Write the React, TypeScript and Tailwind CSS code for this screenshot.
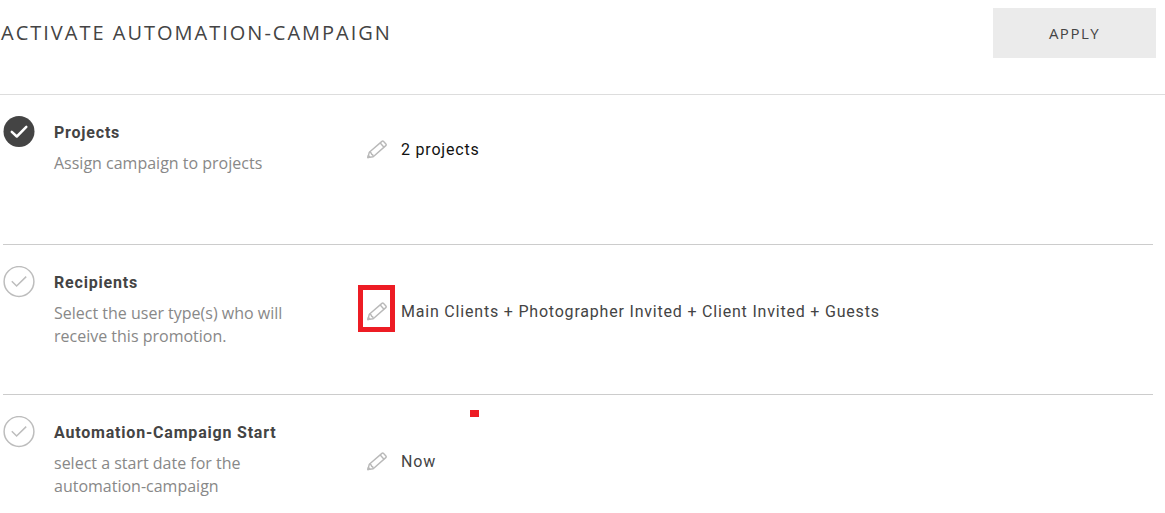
import React from "react";

type Step = {
  id: string;
  title: string;
  description: string;
  value: string;
  done?: boolean;
  highlighted?: boolean;
  valueColor?: string;
};

const STEPS: Step[] = [
  {
    id: "projects",
    title: "Projects",
    description: "Assign campaign to projects",
    value: "2 projects",
    done: true,
    valueColor: "text-[#111111]",
  },
  {
    id: "recipients",
    title: "Recipients",
    description: "Select the user type(s) who will receive this promotion.",
    value: "Main Clients + Photographer Invited + Client Invited + Guests",
    highlighted: true,
  },
  {
    id: "start",
    title: "Automation-Campaign Start",
    description: "select a start date for the automation-campaign",
    value: "Now",
  },
];

const StatusIcon: React.FC<{ done?: boolean }> = ({ done }) => (
  <svg className="h-8 w-8 shrink-0" viewBox="0 0 32 32" fill="none" aria-hidden="true">
    {done ? (
      <circle cx="16" cy="15.5" r="15.5" fill="#444444" />
    ) : (
      <circle cx="16" cy="15.5" r="14.9" stroke="#bdbdbd" strokeWidth="1.5" />
    )}
    <path
      d={done ? "M8.8 15.9l5 4.6L23.3 10.9" : "M8.8 15.2l4.8 4.8L23.2 10.6"}
      stroke={done ? "#ffffff" : "#bdbdbd"}
      strokeWidth={done ? 2.5 : 1.5}
      strokeLinecap={done ? "round" : "butt"}
      strokeLinejoin={done ? "round" : "miter"}
    />
  </svg>
);

const PencilIcon: React.FC = () => (
  <svg className="h-5 w-5" viewBox="0 0 20 20" fill="none" stroke="#b9b9b9" strokeWidth="1.4" strokeLinejoin="round" aria-hidden="true">
    <path d="M0.8 18.6L2.3 13.2L14.9 2.4Q15.8 1.7 16.6 2.5L18.9 5Q19.6 5.9 18.8 6.6L6.2 17.7Z" />
    <path d="M2.3 13.2Q4.4 13.2 4.6 15.2Q6.3 15.6 6.2 17.7M13.2 4L17 8.2" />
    <path d="M0.9 18.5l2-.4-1.5-1.6z" fill="#b9b9b9" />
  </svg>
);

const StepRow: React.FC<{ step: Step }> = ({ step }) => (
  <li className="flex items-start border-b border-[#cccccc] pt-[21px] not-last:min-h-[150px] last:border-b-0">
    <StatusIcon done={step.done} />
    <div className="ml-[19px] mt-[7px] flex min-w-0 flex-1 items-center">
      <div className="w-[304px] shrink-0 pr-16">
        <h2 className="mb-[9px] whitespace-nowrap font-['Roboto',sans-serif] text-base leading-5 font-bold tracking-wider text-[#444444]">
          {step.title}
        </h2>
        <p className="text-base leading-[23px] text-[#888888]">{step.description}</p>
      </div>
      <div className="relative flex items-center">
        <button type="button" aria-label={`Edit ${step.title}`} className="flex h-6 w-[37px] items-center justify-center">
          <PencilIcon />
        </button>
        {step.highlighted && (
          <span className="pointer-events-none absolute -top-[13px] left-0 h-[47px] w-[37px] border-[5px] border-[#ed1c24]" />
        )}
        <span className={`ml-[6px] pt-0.5 font-['Roboto',sans-serif] text-base tracking-wider ${step.valueColor ?? "text-[#444444]"}`}>
          {step.value}
        </span>
      </div>
    </div>
  </li>
);

export default function App() {
  return (
    <main className="relative bg-white font-['Open_Sans',sans-serif]">
      <header className="flex items-start justify-between border-b border-[#dddddd] pt-2 pr-[9px] pb-9 pl-px">
        <h1 className="text-xl leading-[50px] tracking-widest text-[#444444] uppercase">Activate Automation-Campaign</h1>
        <button type="button" className="h-[50px] w-[163px] bg-[#ebebeb] text-[15px] tracking-widest text-[#444444]">
          APPLY
        </button>
      </header>
      <ul className="mr-3 ml-[3px]">
        {STEPS.map((step) => (
          <StepRow key={step.id} step={step} />
        ))}
      </ul>
      {/* Loose marker below the recipients row */}
      <span className="absolute top-[410px] left-[470px] h-[7px] w-[9px] bg-[#ed1c24]" />
    </main>
  );
}
